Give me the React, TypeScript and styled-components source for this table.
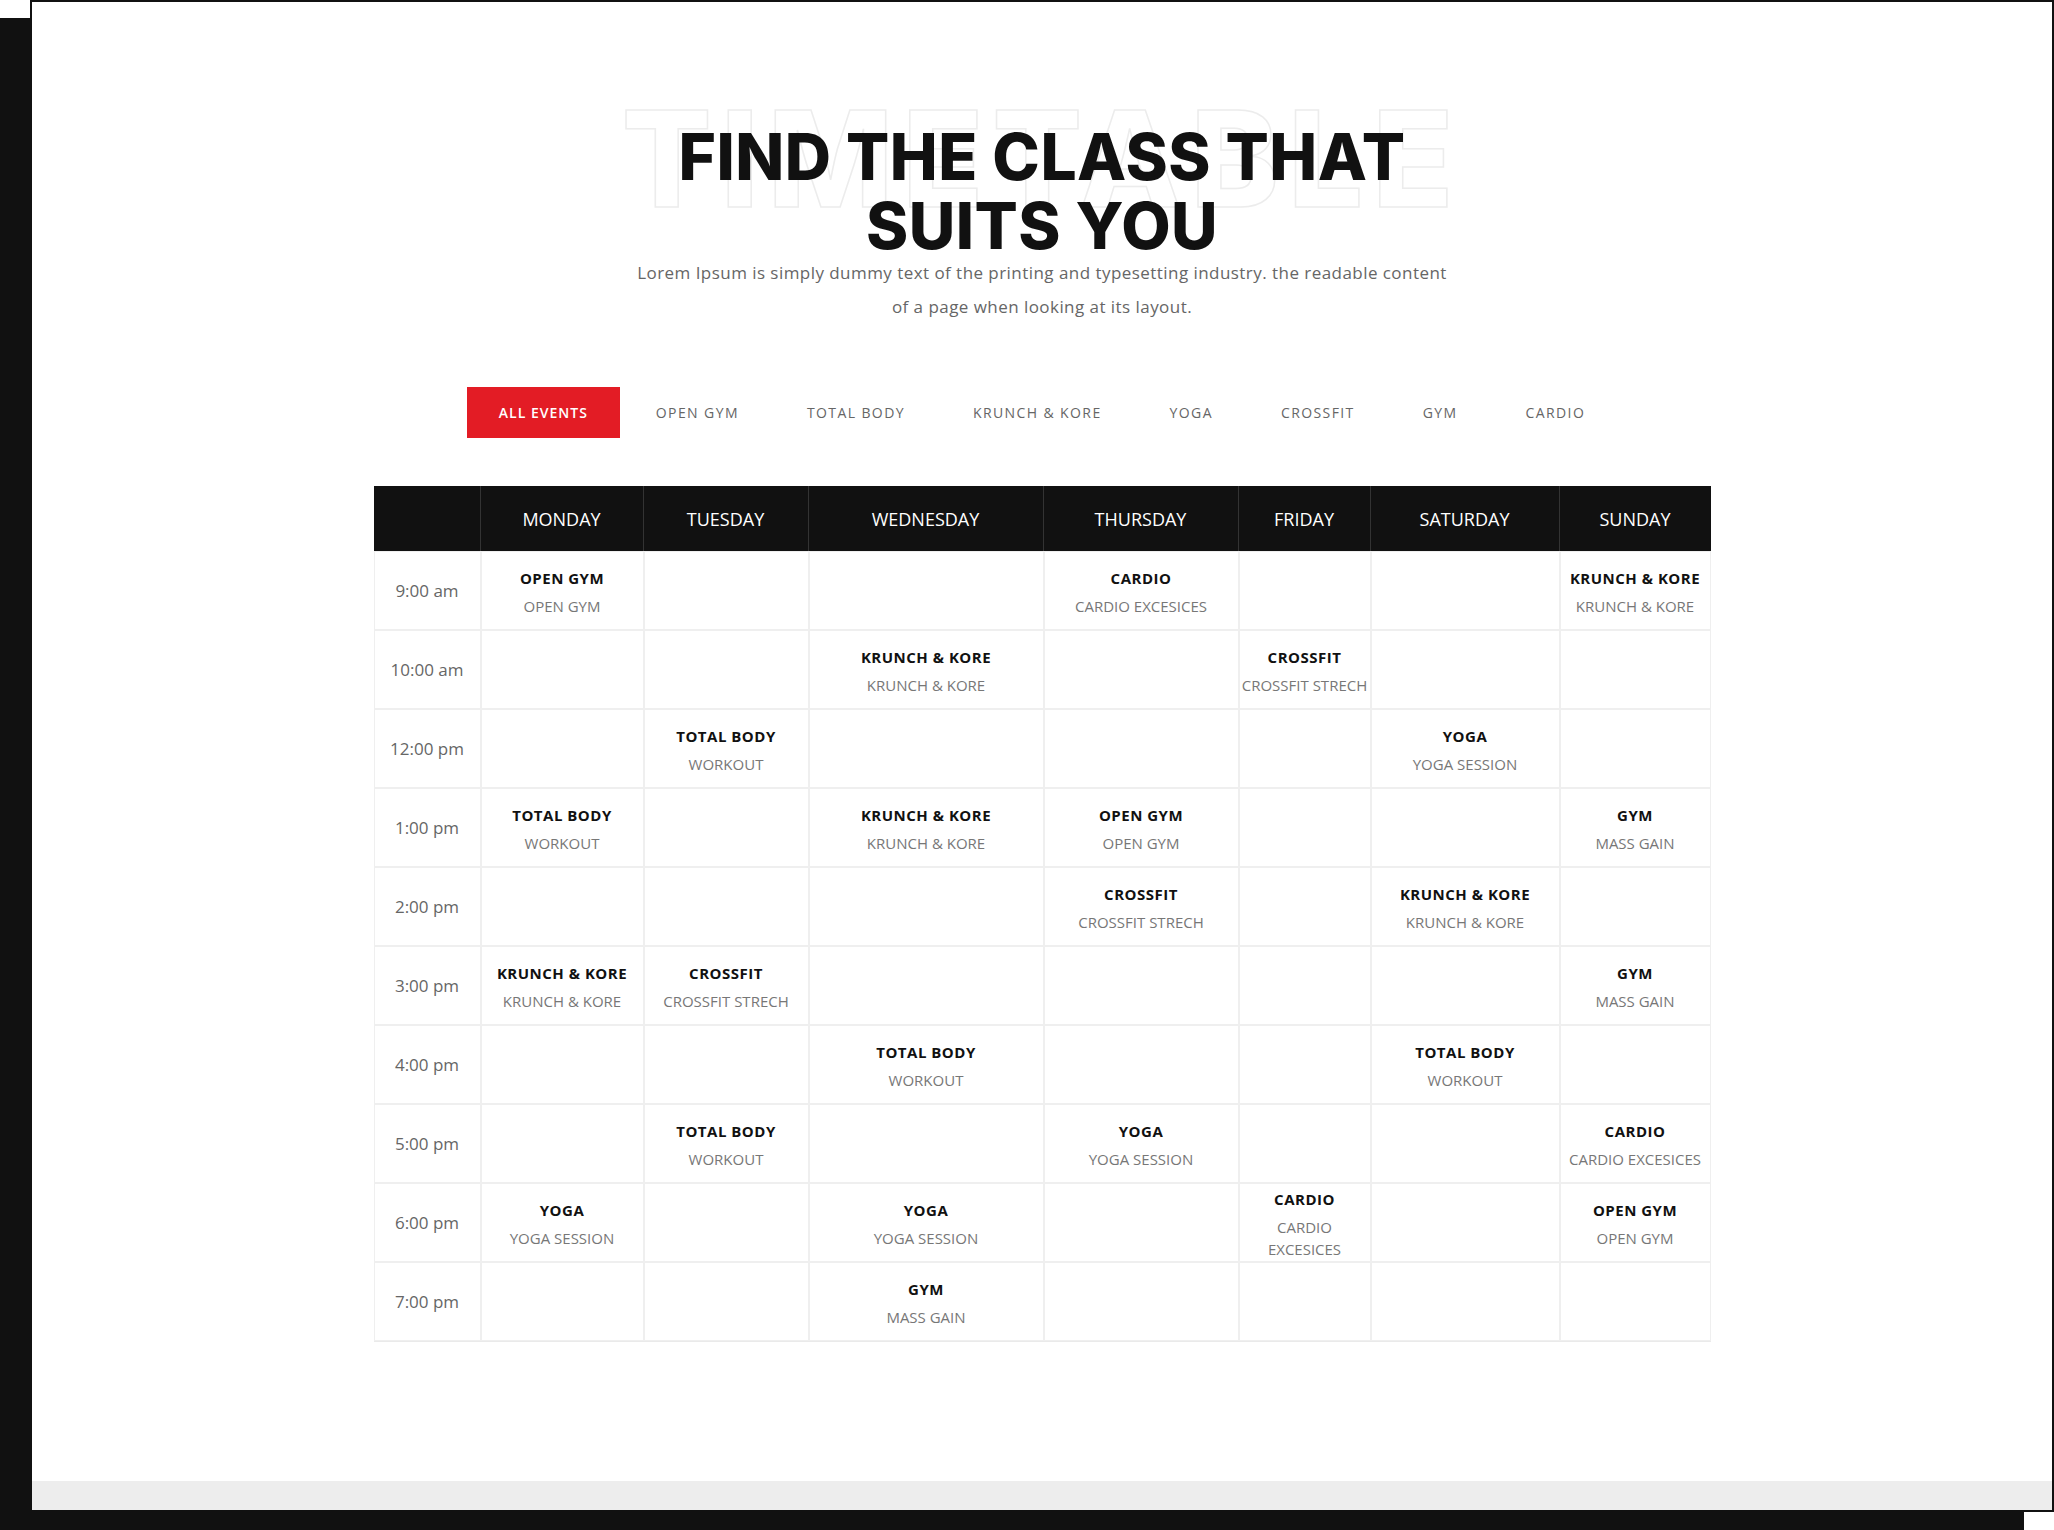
import React from 'react';
import styled, { createGlobalStyle } from 'styled-components';

const GlobalStyle = createGlobalStyle`
  html, body {
    margin: 0;
    padding: 0;
    background: #ffffff;
  }
  body {
    font-family: 'Open Sans', 'Liberation Sans', sans-serif;
    color: #111111;
  }
`;

const Page = styled.div`
  padding-bottom: 18px;
`;

const Frame = styled.div`
  box-sizing: border-box;
  margin-left: 30px;
  width: 2024px;
  height: 1512px;
  border: 2px solid #111111;
  background: #ffffff;
  box-shadow: -30px 18px 0 #111111;
  display: flex;
  flex-direction: column;
`;

const Section = styled.section`
  flex: 1;
  display: flex;
  flex-direction: column;
  align-items: center;
  padding-top: 120px;
`;

const TitleWrap = styled.div`
  position: relative;
  text-align: center;
`;

const Outline = styled.span`
  position: absolute;
  top: -30px;
  left: 50%;
  transform: translateX(-50%);
  font-family: Inter, 'Liberation Sans', sans-serif;
  font-size: 133px;
  font-weight: 800;
  line-height: 1;
  letter-spacing: 9px;
  white-space: nowrap;
  color: transparent;
  -webkit-text-stroke: 1.5px #ececec;
  pointer-events: none;
  z-index: 0;
`;

const Heading = styled.h2`
  position: relative;
  z-index: 1;
  margin: 0;
  font-family: Inter, 'Liberation Sans', sans-serif;
  font-size: 64px;
  font-weight: 800;
  line-height: 69px;
  letter-spacing: 0.5px;
  color: #111111;
`;

const Lead = styled.p`
  margin: -4px 0 0;
  font-size: 17px;
  line-height: 34px;
  letter-spacing: 0.45px;
  color: #666666;
  text-align: center;
`;

const Tabs = styled.nav`
  display: flex;
  gap: 4px;
  margin-top: 63px;
`;

const Tab = styled.button<{ $active?: boolean }>`
  height: 51px;
  padding: 0 32px;
  border: none;
  background: ${p => (p.$active ? '#e31c25' : 'transparent')};
  color: ${p => (p.$active ? '#ffffff' : '#666666')};
  font-family: 'Open Sans', 'Liberation Sans', sans-serif;
  font-size: 14px;
  font-weight: ${p => (p.$active ? 600 : 400)};
  letter-spacing: ${p => (p.$active ? '1px' : '1.4px')};
  text-transform: uppercase;
  cursor: pointer;
`;

const Table = styled.div`
  margin-top: 48px;
  display: flex;
  flex-direction: column;
  border-bottom: 1px solid #eaeaea;
`;

const COLS = '107px 163px 165px 235px 195px 132px 189px 151px';

const HeadRow = styled.div`
  display: grid;
  grid-template-columns: ${COLS};
  height: 65px;
  background: #111111;
`;

const HeadCell = styled.div`
  display: flex;
  align-items: center;
  justify-content: center;
  border-right: 1px solid #333333;
  color: #ffffff;
  font-size: 18px;
  text-transform: uppercase;

  &:last-child {
    border-right: none;
  }
`;

const Row = styled.div`
  display: grid;
  grid-template-columns: ${COLS};
  height: 79px;
`;

const Cell = styled.div`
  box-sizing: border-box;
  display: flex;
  flex-direction: column;
  align-items: center;
  justify-content: center;
  padding-top: 3px;
  border: 1px solid #efefef;
  text-align: center;
`;

const Time = styled(Cell)`
  font-size: 17px;
  color: #666666;
  padding-top: 0;
`;

const ClassName = styled.div`
  font-size: 15px;
  font-weight: 700;
  line-height: 22px;
  letter-spacing: 0.5px;
  color: #111111;
  white-space: nowrap;
`;

const ClassNote = styled.div`
  margin-top: 6px;
  font-size: 15px;
  line-height: 22px;
  color: #777777;
  white-space: pre;
`;

const Strip = styled.div`
  height: 29px;
  background: #ededed;
`;

const tabs = ['All events', 'Open gym', 'Total body', 'Krunch & kore', 'Yoga', 'Crossfit', 'Gym', 'Cardio'];
const days = ['Monday', 'Tuesday', 'Wednesday', 'Thursday', 'Friday', 'Saturday', 'Sunday'];

type Slot = [string, string] | null;

const OG: Slot = ['OPEN GYM', 'OPEN GYM'];
const CA: Slot = ['CARDIO', 'CARDIO EXCESICES'];
const KK: Slot = ['KRUNCH & KORE', 'KRUNCH & KORE'];
const CF: Slot = ['CROSSFIT', 'CROSSFIT STRECH'];
const TB: Slot = ['TOTAL BODY', 'WORKOUT'];
const YO: Slot = ['YOGA', 'YOGA SESSION'];
const GY: Slot = ['GYM', 'MASS GAIN'];

const schedule: { time: string; slots: Slot[] }[] = [
  { time: '9:00 am', slots: [OG, null, null, CA, null, null, KK] },
  { time: '10:00 am', slots: [null, null, KK, null, CF, null, null] },
  { time: '12:00 pm', slots: [null, TB, null, null, null, YO, null] },
  { time: '1:00 pm', slots: [TB, null, KK, OG, null, null, GY] },
  { time: '2:00 pm', slots: [null, null, null, CF, null, KK, null] },
  { time: '3:00 pm', slots: [KK, CF, null, null, null, null, GY] },
  { time: '4:00 pm', slots: [null, null, TB, null, null, TB, null] },
  { time: '5:00 pm', slots: [null, TB, null, YO, null, null, CA] },
  { time: '6:00 pm', slots: [YO, null, YO, null, ['CARDIO', 'CARDIO\nEXCESICES'], null, OG] },
  { time: '7:00 pm', slots: [null, null, GY, null, null, null, null] },
];

export default function App() {
  return (
    <Page>
      <GlobalStyle />
      <Frame>
        <Section>
          <TitleWrap>
            <Outline aria-hidden>TIMETABLE</Outline>
            <Heading>
              FIND THE CLASS THAT
              <br />
              SUITS YOU
            </Heading>
          </TitleWrap>
          <Lead>
            Lorem Ipsum is simply dummy text of the printing and typesetting industry. the readable content
            <br />
            of a page when looking at its layout.
          </Lead>

          <Tabs>
            {tabs.map((t, i) => (
              <Tab key={t} $active={i === 0}>
                {t}
              </Tab>
            ))}
          </Tabs>

          <Table>
            <HeadRow>
              <HeadCell />
              {days.map(d => (
                <HeadCell key={d}>{d}</HeadCell>
              ))}
            </HeadRow>
            {schedule.map(row => (
              <Row key={row.time}>
                <Time>{row.time}</Time>
                {row.slots.map((s, i) => (
                  <Cell key={i}>
                    {s && (
                      <>
                        <ClassName>{s[0]}</ClassName>
                        <ClassNote>{s[1]}</ClassNote>
                      </>
                    )}
                  </Cell>
                ))}
              </Row>
            ))}
          </Table>
        </Section>
        <Strip />
      </Frame>
    </Page>
  );
}
